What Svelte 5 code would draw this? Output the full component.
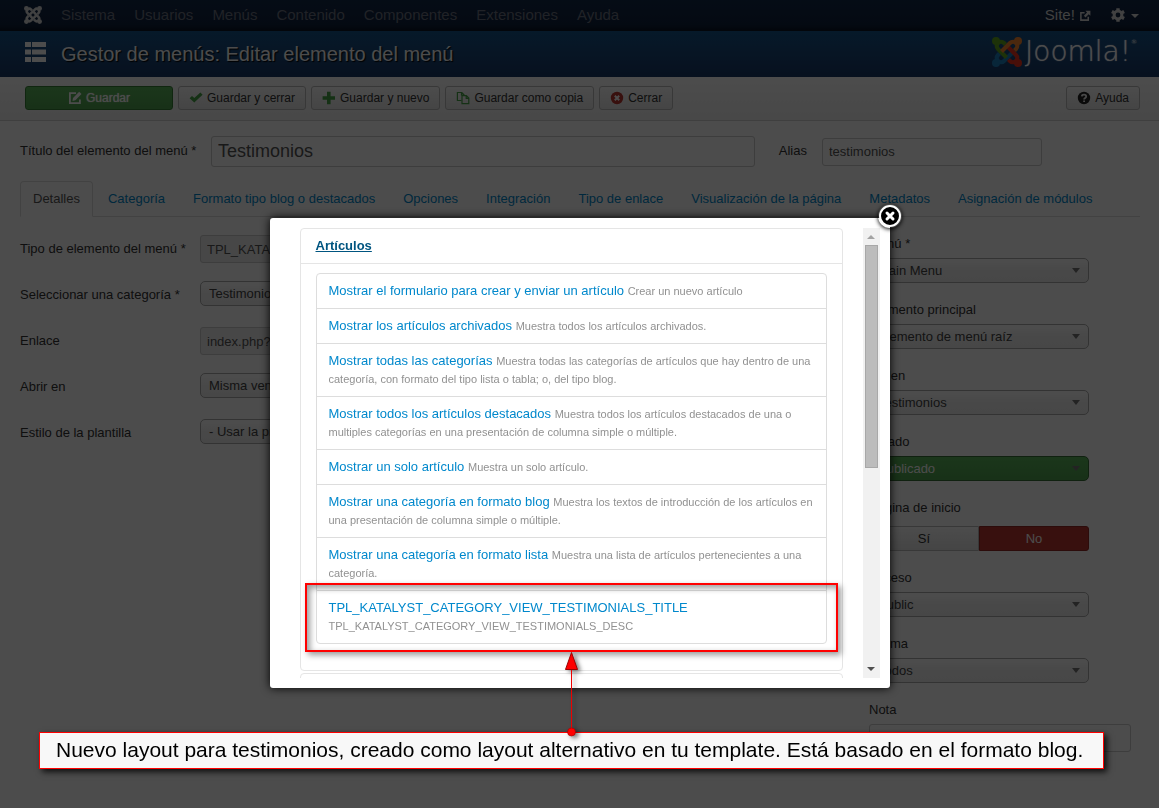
<script>
  const nav = ['Sistema', 'Usuarios', 'Menús', 'Contenido', 'Componentes', 'Extensiones', 'Ayuda'];

  const tabs = [
    'Detalles', 'Categoría', 'Formato tipo blog o destacados', 'Opciones', 'Integración',
    'Tipo de enlace', 'Visualización de la página', 'Metadatos', 'Asignación de módulos'
  ];

  const toolbar = [
    { icon: 'edit', text: 'Guardar', primary: true },
    { icon: 'check', text: 'Guardar y cerrar' },
    { icon: 'plus', text: 'Guardar y nuevo' },
    { icon: 'copy', text: 'Guardar como copia' },
    { icon: 'cancel', text: 'Cerrar' }
  ];

  const fields = [
    { id: 'type', label: 'Tipo de elemento del menú *', kind: 'input', value: 'TPL_KATALYST_CATEGORY_VIEW_TESTIMONIALS_TITLE' },
    { id: 'category', label: 'Seleccionar una categoría *', kind: 'select', value: 'Testimonios' },
    { id: 'link', label: 'Enlace', kind: 'input', value: 'index.php?option=com_content&view=category' },
    { id: 'target', label: 'Abrir en', kind: 'select', value: 'Misma ventana' },
    { id: 'template', label: 'Estilo de la plantilla', kind: 'select', value: '- Usar la predeterminada -' }
  ];

  const side = [
    { id: 'menu', label: 'Menú *', kind: 'select', value: 'Main Menu' },
    { id: 'parent', label: 'Elemento principal', kind: 'select', value: 'Elemento de menú raíz' },
    { id: 'order', label: 'Orden', kind: 'select', value: 'Testimonios' },
    { id: 'state', label: 'Estado', kind: 'select', value: 'Publicado', green: true },
    { id: 'home', label: 'Página de inicio', kind: 'toggle' },
    { id: 'access', label: 'Acceso', kind: 'select', value: 'Public' },
    { id: 'language', label: 'Idioma', kind: 'select', value: 'Todos' },
    { id: 'note', label: 'Nota', kind: 'input', value: '' }
  ];

  const types = [
    ['Mostrar el formulario para crear y enviar un artículo', 'Crear un nuevo artículo'],
    ['Mostrar los artículos archivados', 'Muestra todos los artículos archivados.'],
    ['Mostrar todas las categorías', 'Muestra todas las categorías de artículos que hay dentro de una categoría, con formato del tipo lista o tabla; o, del tipo blog.'],
    ['Mostrar todos los artículos destacados', 'Muestra todos los artículos destacados de una o multiples categorías en una presentación de columna simple o múltiple.'],
    ['Mostrar un solo artículo', 'Muestra un solo artículo.'],
    ['Mostrar una categoría en formato blog', 'Muestra los textos de introducción de los artículos en una presentación de columna simple o múltiple.'],
    ['Mostrar una categoría en formato lista', 'Muestra una lista de artículos pertenecientes a una categoría.'],
    ['TPL_KATALYST_CATEGORY_VIEW_TESTIMONIALS_TITLE', 'TPL_KATALYST_CATEGORY_VIEW_TESTIMONIALS_DESC']
  ];

  const markColors = ['#62a81e', '#f9862f', '#f0341f', '#1c80c0'];
</script>

{#snippet mark(colors)}
  <svg class="mark" viewBox="0 0 30 30" aria-hidden="true">
    {#each [3, 0, 2, 1] as i}
      <g transform="rotate({i * 90} 15 15)" stroke={colors[i]} fill="none">
        <path d="M13.5 7.5 12 6A4.24 4.24 0 0 0 6 12L14.5 20.5" stroke-width="4.200" />
        <circle cx="4" cy="4" r="4" fill={colors[i]} stroke="none" />
      </g>
    {/each}
  </svg>
{/snippet}

{#snippet icon(name)}
  <svg class="icon" viewBox="0 0 14 14" aria-hidden="true">
    {#if name === 'edit'}
      <path d="M8 2.2H1.9v10h10V8.5" fill="none" stroke="#fff" stroke-width="1.8" />
      <path d="M4.5 10 5 7 11.2.8l2.3 2.3L7.4 9.3z" fill="#fff" />
    {:else if name === 'check'}
      <path d="M.6 7.2 3 4.9l2.3 2.2L11.4 1.4l2.2 2.3-8.3 7.9z" fill="#46a546" />
    {:else if name === 'plus'}
      <path d="M5 .8h3.6v4.4H13v3.6H8.600v4.400H5V8.800H.6V5.200H5z" fill="#46a546" />
    {:else if name === 'copy'}
      <path d="M5.500 9.500H1.400V1.500h4.400l2.200 2.200v1M5.500 1.500v2.500h2.500" fill="none" stroke="#46a546" stroke-width="1.200" />
      <path d="M6 4.700h4.400l2.400 2.400v5.500H6zM10.200 4.700v2.700h2.600" fill="none" stroke="#46a546" stroke-width="1.200" />
    {:else if name === 'cancel'}
      <circle cx="7" cy="7" r="6.200" fill="#bd362f" />
      <path d="m4.800 4.800 4.400 4.400m0-4.400L4.800 9.200" stroke="#fff" stroke-width="2" />
    {:else if name === 'help'}
      <circle cx="7" cy="7" r="6.200" fill="#222" />
      <path d="M4.800 5.300c.2-2.300 4.400-2.200 4.400.1C9.200 7 7.100 6.900 7.100 8.500M7.100 9.500v1.600" fill="none" stroke="#f2f2f2" stroke-width="1.800" />
    {:else if name === 'out'}
      <path d="M6.500 3.200H2.200v8.600h8.600V8" fill="none" stroke="#d9d9d9" stroke-width="1.800" />
      <path d="M7.500 1h5.800v5.800L11.300 5 7.600 8.700 5.700 6.800 9.400 3z" fill="#d9d9d9" />
    {:else if name === 'gear'}
      <circle cx="7" cy="7" r="3.900" fill="none" stroke="#d9d9d9" stroke-width="3" />
      <path d="M7 .2v2.400M7 11.400v2.400M.9 3.500l2.300 1.200M10.800 9.300l2.300 1.200M.9 10.500l2.300-1.200M10.800 4.700l2.300-1.200" stroke="#d9d9d9" stroke-width="3.400" />
    {/if}
  </svg>
{/snippet}

{#snippet control(f)}
  {#if f.kind === 'select'}
    <span class="select" class:green={f.green}>
      <select id={f.id}><option>{f.value}</option></select>
    </span>
  {:else if f.kind === 'toggle'}
    <div class="toggle" role="group" aria-label={f.label}>
      <button id={f.id} type="button">Sí</button><button type="button" class="no">No</button>
    </div>
  {:else}
    <input id={f.id} type="text" value={f.value} readonly={f.value !== ''} />
  {/if}
{/snippet}

<div class="page">
  <nav class="navbar">
    <a class="home" href="#home" aria-label="Joomla">{@render mark(['#d9d9d9', '#d9d9d9', '#d9d9d9', '#d9d9d9'])}</a>
    <ul>
      {#each nav as item}<li>{item}</li>{/each}
    </ul>
    <a class="site" href="#site">Site! {@render icon('out')}</a>
    <button class="gear" type="button" aria-label="Cuenta">{@render icon('gear')}<span class="caret"></span></button>
  </nav>

  <header>
    <svg class="list-icon" viewBox="0 0 21 20" aria-hidden="true">
      <path d="M0 0h6v5H0zM7 0h14v5H7zM0 7.500h6v5H0zM7 7.500h14v5H7zM0 15h6v5H0zM7 15h14v5H7z" fill="#fff" />
    </svg>
    <h1>Gestor de menús: Editar elemento del menú</h1>
    <div class="logo">{@render mark(markColors)}<span>Joomla!</span><sup>®</sup></div>
  </header>

  <div class="toolbar">
    {#each toolbar as b}
      <button type="button" class="btn" class:primary={b.primary}>{@render icon(b.icon)}{b.text}</button>
    {/each}
    <button type="button" class="btn help">{@render icon('help')}Ayuda</button>
  </div>

  <main>
    <div class="title-row">
      <label class="title-label" for="title">Título del elemento del menú *</label>
      <input id="title" class="title" type="text" value="Testimonios" />
      <label for="alias">Alias</label>
      <input id="alias" class="alias" type="text" value="testimonios" />
    </div>

    <ul class="tabs">
      {#each tabs as t, i}
        <li><a href="#tab{i}" class:active={i === 0}>{t}</a></li>
      {/each}
    </ul>

    <div class="columns">
      <div class="fields">
        {#each fields as f}
          <div class="field">
            <label for={f.id}>{f.label}</label>
            {@render control(f)}
          </div>
        {/each}
      </div>
      <div class="side">
        {#each side as f}
          <div class="side-field" class:with-toggle={f.kind === 'toggle'}>
            <label for={f.id}>{f.label}</label>
            {@render control(f)}
          </div>
        {/each}
      </div>
    </div>
  </main>
</div>

<div class="overlay"></div>

<div class="modal" role="dialog" aria-label="Artículos">
  <div class="frame">
    <div class="content">
      <section class="group">
        <h2><a href="#articulos">Artículos</a></h2>
        <ul class="types">
          {#each types as [name, desc]}
            <li><a href="#tipo">{name}</a> <small>{desc}</small></li>
          {/each}
        </ul>
      </section>
      <section class="group"></section>
    </div>
    <div class="scrollbar" aria-hidden="true">
      <span class="up"></span>
      <span class="thumb"></span>
      <span class="down"></span>
    </div>
  </div>
  <button class="close" type="button" aria-label="Cerrar ventana">
    <svg viewBox="0 0 24 24">
      <circle cx="12" cy="12" r="10" fill="#000" stroke="#fff" stroke-width="2" />
      <path d="m9 9 6 6m0-6-6 6" stroke="#fff" stroke-width="3" stroke-linecap="round" />
    </svg>
  </button>
  <div class="highlight"></div>
</div>

<p class="callout">Nuevo layout para testimonios, creado como layout alternativo en tu template. Está basado en el formato blog.</p>

<svg class="arrow" viewBox="0 0 24 92" aria-hidden="true">
  <path d="M11.500 20v60" stroke="#e00" />
  <path d="M11.500 2.500 17.500 19.500h-12z" fill="#f00" stroke="#900" />
  <circle cx="11.500" cy="82" r="4" fill="#f00" stroke="#900" stroke-width=".6" />
</svg>

<style>
  :global(body) {
    font: 13px/18px "Liberation Sans", Arial, sans-serif;
    color: #333;
    background: #fff;
    overflow: hidden;
  }

  ul, h1, h2, p { margin: 0; padding: 0; }
  ul { list-style: none; }
  a { color: #08c; text-decoration: none; }
  input, select, button { font: inherit; box-sizing: border-box; margin: 0; }

  .page { min-height: 100vh; }

  .navbar {
    display: flex;
    align-items: center;
    height: 31px;
    padding: 0 20px 2px 24px;
    box-sizing: border-box;
    font-size: 15px;
    color: #6d7382;
    background: linear-gradient(#13294a, #10223e 80%, #0a1424);
  }
  .navbar ul { display: flex; gap: 19px; margin-left: 19px; }
  .home, .home .mark { display: block; width: 18px; height: 18px; }
  .site { margin-left: auto; color: #d9d9d9; }
  .site .icon { width: 12px; height: 12px; vertical-align: -2px; }
  .gear {
    display: flex;
    align-items: center;
    gap: 6px;
    margin-left: 20px;
    padding: 0;
    border: 0;
    background: none;
  }
  .caret { margin-top: 3px; border: 4px solid transparent; border-top-color: #d9d9d9; border-bottom: 0; }

  header {
    display: flex;
    align-items: center;
    height: 46px;
    padding: 0 22px 0 25px;
    background: linear-gradient(#17568c, #1a3867);
  }
  .list-icon { width: 21px; height: 20px; margin-top: -4px; }
  h1 {
    margin-left: 15px;
    font-size: 20px;
    line-height: 46px;
    font-weight: normal;
    color: #fff;
    text-shadow: 1px 1px 1px #000;
  }
  .logo {
    display: flex;
    align-items: center;
    margin-left: auto;
    padding-bottom: 5px;
    font: 200 28px/40px "DejaVu Sans", sans-serif;
    color: #fff;
    text-shadow: 0 0 1px #fff;
  }
  .logo .mark { width: 30px; height: 30px; margin-right: 3px; }
  .logo sup { font-size: 6px; line-height: 10px; align-self: flex-start; margin-top: 5px; }

  .toolbar {
    display: flex;
    gap: 5px;
    padding: 9px 19px 10px 25px;
    background: linear-gradient(#fff, #f0f0f0);
    border-bottom: 1px solid #d3d3d3;
  }
  .btn {
    display: flex;
    align-items: center;
    justify-content: center;
    gap: 4px;
    height: 24px;
    padding: 0 10px;
    border: 1px solid #bbb;
    border-radius: 3px;
    font-size: 12px;
    color: #333;
    background: linear-gradient(#fff, #e6e6e6);
  }
  .icon { width: 14px; height: 14px; }
  .primary {
    min-width: 148px;
    color: #fff;
    border-color: #388038;
    background: linear-gradient(#5bb75b, #51a351);
    text-shadow: 0 0 1px #fff;
  }
  .help { margin-left: auto; }

  main { padding: 15px 19px 0 20px; }

  input {
    height: 28px;
    padding: 0 6px;
    border: 1px solid #ccc;
    border-radius: 3px;
    color: #555;
    background: #fff;
  }
  .title-row { display: flex; align-items: center; padding-right: 98px; }
  .title-row label { line-height: 28px; margin-bottom: 2px; }
  .title-label { width: 191px; flex: none; }
  .title { flex: 1; height: 31px; min-width: 0; margin-right: 24px; font-size: 18px; }
  .alias { width: 220px; margin-left: 15px; }

  .tabs { display: flex; gap: 2px; margin-top: 14px; border-bottom: 1px solid #ddd; }
  .tabs a {
    display: block;
    margin-bottom: -1px;
    padding: 8px 12px;
    border: 1px solid transparent;
    border-radius: 4px 4px 0 0;
    white-space: nowrap;
  }
  .tabs .active { color: #555; border-color: #ddd #ddd #fff; background: #fff; }

  .columns { display: flex; justify-content: space-between; }
  .fields, .side { padding-top: 18px; }
  .field { display: flex; height: 46px; }
  .field label { width: 180px; line-height: 28px; }
  .field input { width: 220px; background: #eee; }

  .side { width: 271px; }
  .side-field { height: 66px; }
  .side-field label { display: block; margin-bottom: 5px; }
  .with-toggle { height: 70px; }
  .with-toggle label { margin-bottom: 9px; }
  .side-field input { width: 262px; }

  .select { position: relative; display: block; width: 220px; height: 25px; }
  .select::after {
    content: "";
    position: absolute;
    right: 9px;
    top: 10px;
    border: 4px solid transparent;
    border-top: 5px solid #777;
    border-bottom: 0;
  }
  .select select {
    appearance: none;
    width: 100%;
    height: 25px;
    padding: 0 24px 0 8px;
    border: 1px solid #aaa;
    border-radius: 5px;
    color: #444;
    background: linear-gradient(#fff 10%, #f2f2f2 50%, #eee);
  }
  .green select {
    color: #fff;
    border-color: #387038;
    background: linear-gradient(#5bb75b, #51a351);
  }

  .toggle { display: flex; width: 220px; }
  .toggle button {
    flex: 1;
    height: 25px;
    padding: 0;
    border: 1px solid #bbb;
    border-radius: 3px 0 0 3px;
    color: #333;
    background: linear-gradient(#fff, #e6e6e6);
  }
  .toggle .no { color: #fff; border-color: #942a25; border-radius: 0 3px 3px 0; background: #bd362f; }

  .overlay { position: fixed; inset: 0; background: rgba(0, 0, 0, 0.7); }

  .modal {
    position: absolute;
    top: 218px;
    left: 50%;
    width: 620px;
    padding: 10px;
    box-sizing: border-box;
    transform: translateX(-50%);
    border-radius: 3px;
    background: #fff;
    box-shadow: 0 0 10px #000;
  }
  .frame { display: flex; height: 450px; overflow: hidden; }
  .content { flex: 1; padding: 0 20px; }
  .group { margin-bottom: 2px; border: 1px solid #e5e5e5; border-radius: 4px; min-height: 30px; }
  h2 { padding: 8px 15px 9px; border-bottom: 1px solid #e5e5e5; font-size: 13px; line-height: 17px; }
  h2 a { color: #005580; text-decoration: underline; }
  .types { margin: 9px 15px 26px; border: 1px solid #ddd; border-radius: 4px; }
  .types li { padding: 8px 12px; border-top: 1px solid #ddd; }
  .types li:first-child { border-top: 0; }
  small { font-size: 11px; color: #919191; }

  .scrollbar {
    display: flex;
    flex-direction: column;
    align-items: center;
    width: 17px;
    background: #f1f1f1;
  }
  .up { margin: 7px 0 6px; border: 4px solid transparent; border-bottom-color: #a3a3a3; border-top: 0; }
  .thumb { width: 13px; height: 223px; box-sizing: border-box; border: 1px solid #a8a8a8; background: #bcbcbc; }
  .down { margin: auto 0 7px; border: 4px solid transparent; border-top-color: #505050; border-bottom: 0; }

  .close {
    position: absolute;
    top: -14px;
    right: -12px;
    width: 24px;
    height: 24px;
    padding: 0;
    border: 0;
    border-radius: 50%;
    background: none;
    box-shadow: 0 1px 4px #000;
  }
  .close svg { display: block; }

  .highlight {
    position: absolute;
    top: 365px;
    left: 35px;
    right: 52px;
    height: 69px;
    box-sizing: border-box;
    border: 2px solid #f00;
    box-shadow: 3px 3px 6px rgba(0, 0, 0, 0.4), inset 3px 3px 6px rgba(0, 0, 0, 0.4);
  }

  .callout {
    position: absolute;
    top: 732px;
    left: 39px;
    right: 55px;
    box-sizing: border-box;
    border: 1px solid #f00;
    padding: 0 16px 2px;
    font-size: 21px;
    line-height: 33px;
    white-space: nowrap;
    color: #000;
    background: #f8f8f8;
    box-shadow: 3px 3px 6px rgba(0, 0, 0, 0.8);
  }

  .arrow {
    position: absolute;
    top: 650px;
    left: 50%;
    width: 24px;
    height: 92px;
    margin-left: -20px;
    filter: drop-shadow(3px 2px 2px rgba(0, 0, 0, 0.5));
  }
</style>
